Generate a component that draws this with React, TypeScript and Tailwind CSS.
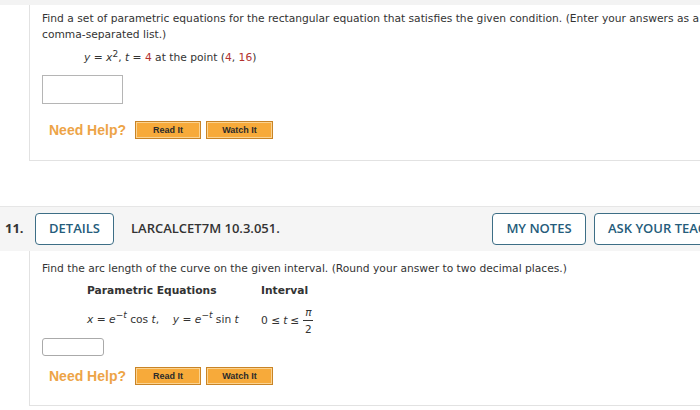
import React from "react";

const verdana = { fontFamily: '"DejaVu Sans", Verdana, sans-serif' };
const openSans = { fontFamily: '"Open Sans", "Noto Sans", sans-serif' };
const arial = { fontFamily: '"Liberation Sans", Arial, sans-serif' };

const HelpButton: React.FC<{ label: string; width: string }> = ({ label, width }) => (
  <button
    className={`h-[18px] ${width} border border-[#c98426] bg-[#f7aa3a] text-[9px] font-bold text-[#2b2b2b] shadow-[inset_0_0_0_1px_#fbd391] flex items-center justify-center`}
    style={arial}
  >
    {label}
  </button>
);

const NeedHelp: React.FC = () => (
  <div className="flex items-center ml-[7px]">
    <span className="text-[14px] font-bold text-[#eda447] mr-[9px]" style={arial}>
      Need Help?
    </span>
    <HelpButton label="Read It" width="w-[66px]" />
    <div className="w-[5px]" />
    <HelpButton label="Watch It" width="w-[67px]" />
  </div>
);

const HeaderButton: React.FC<{ label: string; className: string }> = ({ label, className }) => (
  <button
    className={`h-[32px] shrink-0 rounded-[4px] border-[1.5px] border-[#3d6e86] bg-white text-[13px] font-semibold text-[#255c7b] whitespace-nowrap ${className}`}
    style={openSans}
  >
    {label}
  </button>
);

const Red: React.FC<{ children: React.ReactNode }> = ({ children }) => (
  <span className="text-[#b3322f]">{children}</span>
);

export default function App() {
  return (
    <div className="w-[700px] h-[410px] overflow-hidden bg-white text-[#333]" style={verdana}>
      <div className="h-[5px] bg-[#f3f3f3]" />

      {/* question 10 body */}
      <div className="ml-[29px] border-l border-b border-[#e2e2e2] pl-[12px] pt-[6px] pb-[21px] text-[10.7px] leading-[16px]">
        <p className="whitespace-nowrap">
          Find a set of parametric equations for the rectangular equation that satisfies the given condition. (Enter your answers as a
        </p>
        <p>comma-separated list.)</p>
        <p className="mt-[7px] ml-[42px]">
          <i>y</i> = <i>x</i>
          <sup className="text-[9px]">2</sup>, <i>t</i> = <Red>4</Red> at the point (<Red>4</Red>, <Red>16</Red>)
        </p>
        <div className="mt-[9px] w-[81px] h-[29px] border border-[#b5b5b5] bg-white" />
        <div className="mt-[17px]">
          <NeedHelp />
        </div>
      </div>

      <div className="h-[45px]" />

      {/* question 11 header */}
      <div className="h-[45px] bg-[#f5f5f5] border-t border-[#e6e6e6] flex items-center pl-[5px]">
        <span className="text-[13px] font-bold text-[#333] w-[30px]" style={openSans}>
          11.
        </span>
        <HeaderButton label="DETAILS" className="w-[79px]" />
        <span className="ml-[17px] text-[13px] font-semibold text-[#333] whitespace-nowrap" style={openSans}>
          LARCALCET7M 10.3.051.
        </span>
        <div className="flex-1" />
        <HeaderButton label="MY NOTES" className="w-[94px]" />
        <HeaderButton label="ASK YOUR TEACHER" className="ml-[8px] w-[150px] -mr-[44px] text-left pl-[13px]" />
      </div>

      {/* question 11 body */}
      <div className="ml-[29px] border-l border-b border-[#e2e2e2] pl-[12px] pt-[10px] pb-[20px] text-[10.7px] leading-[16px]">
        <p className="whitespace-nowrap">
          Find the arc length of the curve on the given interval. (Round your answer to two decimal places.)
        </p>
        <div className="ml-[45px] mt-[6px] grid grid-cols-[174px_auto] items-center">
          <span className="font-bold">Parametric Equations</span>
          <span className="font-bold">Interval</span>
          <span className="pt-[4px] whitespace-nowrap">
            <i>x</i> = <i>e</i>
            <sup className="text-[9px] italic">−t</sup> cos <i>t</i>,&nbsp;&nbsp;&nbsp; <i>y</i> = <i>e</i>
            <sup className="text-[9px] italic">−t</sup> sin <i>t</i>
          </span>
          <span className="flex items-center pt-[6px] whitespace-nowrap">
            0 ≤ <i className="mx-[3px]">t</i> ≤
            <span className="ml-[4px] inline-flex flex-col items-center text-[10.5px] leading-[14px]">
              <i>π</i>
              <span className="w-[10px] border-t border-[#333] my-[1px]" />
              <span>2</span>
            </span>
          </span>
        </div>
        <div className="mt-[2px] w-[62px] h-[18px] rounded-[3px] border border-[#aaa] bg-white" />
        <div className="mt-[11px]">
          <NeedHelp />
        </div>
      </div>
    </div>
  );
}
